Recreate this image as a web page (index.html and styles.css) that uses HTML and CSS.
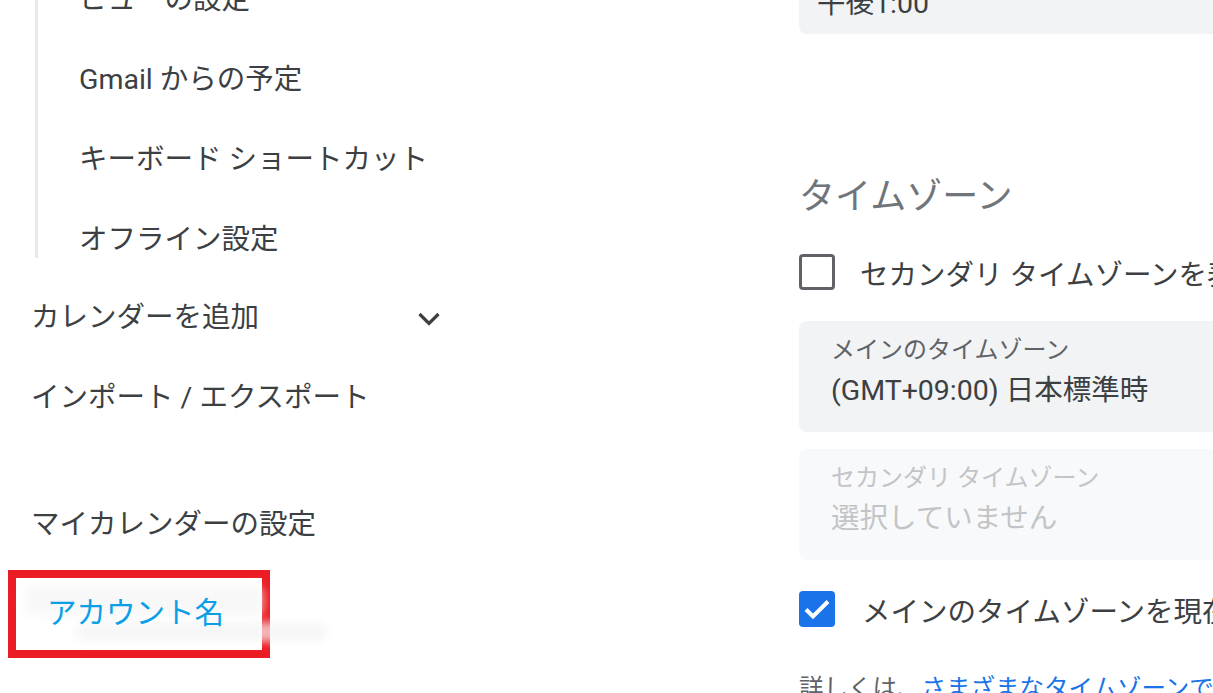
FILE: index.html
```html
<!DOCTYPE html>
<html lang="ja">
<head>
<meta charset="utf-8">
<link rel="stylesheet" href="styles.css">
</head>
<body>
<div class="page">
  <nav class="side">
    <ul class="sublist">
      <li class="subitem">ビューの設定</li>
      <li class="subitem">Gmail からの予定</li>
      <li class="subitem">キーボード ショートカット</li>
      <li class="subitem">オフライン設定</li>
    </ul>
    <div class="navitem expand">
      <span>カレンダーを追加</span>
      <svg class="chev" width="24" height="16" viewBox="0 0 24 16"><path d="M2.5 3l9.5 9.5L21.5 3" fill="none" stroke="#3c4043" stroke-width="3.2"/></svg>
    </div>
    <div class="navitem">インポート / エクスポート</div>
    <div class="navitem mycal">マイカレンダーの設定</div>
    <div class="account">
      <span class="blur b1"></span>
      <span class="blur b2"></span>
      <span class="acct-name">アカウント名</span>
    </div>
  </nav>
  <main class="content">
    <div class="field top">
      <div class="value">午後1:00</div>
    </div>
    <h2 class="heading">タイムゾーン</h2>
    <label class="check">
      <span class="box"></span>
      <span class="ctext">セカンダリ タイムゾーンを表示する</span>
    </label>
    <div class="field first">
      <div class="label">メインのタイムゾーン</div>
      <div class="value">(GMT+09:00) 日本標準時</div>
    </div>
    <div class="field disabled">
      <div class="label">セカンダリ タイムゾーン</div>
      <div class="value">選択していません</div>
    </div>
    <label class="check checked">
      <span class="box">
        <svg width="36" height="36" viewBox="0 0 36 36"><path d="M7 18.5l7 7 15-15" fill="none" stroke="#fff" stroke-width="4"/></svg>
      </span>
      <span class="ctext">メインのタイムゾーンを現在地に更新する</span>
    </label>
    <p class="help">詳しくは、<a href="#">さまざまなタイムゾーンでのカレンダーの使用</a>をご覧ください</p>
  </main>
</div>
</body>
</html>
```

FILE: styles.css
```css
html, body {
  margin: 0;
  padding: 0;
  background: #fff;
  overflow: hidden;
}
body {
  width: 1213px;
  height: 693px;
  font-family: Roboto, "Noto Sans CJK JP", sans-serif;
  color: #3c4043;
}
.page {
  display: grid;
  grid-template-columns: 470px 700px;
  column-gap: 329px;
  width: 1500px;
}
.side {
  display: flex;
  flex-direction: column;
}
.sublist {
  list-style: none;
  margin: -20px 0 0 35px;
  padding: 0;
  border-left: 3px solid #e8e8ef;
  display: flex;
  flex-direction: column;
  gap: 40px;
}
.subitem {
  height: 40px;
  line-height: 40px;
  font-size: 28.5px;
  padding-left: 41px;
  white-space: nowrap;
}
.sublist .subitem:last-child {
  margin-bottom: -2px;
}
.navitem {
  height: 40px;
  line-height: 40px;
  font-size: 28.5px;
  padding-left: 31px;
  white-space: nowrap;
  margin-top: 40px;
}
.expand {
  display: flex;
  align-items: center;
  justify-content: space-between;
  width: 410px;
}
.chev {
  width: 24px;
  height: 16px;
  margin-top: 2px;
}
.mycal {
  margin-top: 87px;
}
.account {
  position: relative;
  margin: 25px 0 0 8px;
  width: 246px;
  height: 72px;
  border: 8px solid #ec1c24;
  display: flex;
  align-items: center;
}
.acct-name {
  position: relative;
  font-size: 29.5px;
  color: #0a9fe6;
  padding-left: 31px;
  padding-bottom: 8px;
}
.blur {
  position: absolute;
  background: #f4f4f6;
  filter: blur(4px);
  border-radius: 8px;
}
.b1 { left: 8px; top: 8px; width: 240px; height: 30px; opacity: .6; }
.b2 { left: 60px; top: 44px; width: 250px; height: 20px; opacity: .7; }

.content {
  display: flex;
  flex-direction: column;
}
.field {
  background: #f1f3f4;
  border-radius: 8px;
  height: 111px;
  box-sizing: border-box;
  padding: 14px 32px 0;
  margin-top: 17px;
}
.field.first {
  margin-top: 29px;
}
.field.top {
  height: 90px;
  margin-top: -56px;
  padding: 40px 18px 0;
}
.field .label {
  font-size: 24px;
  color: #5f6368;
  line-height: 30px;
}
.field .value {
  font-size: 28.5px;
  line-height: 40px;
  margin-top: 6px;
  color: #3c4043;
}
.field.top .value {
  margin-top: 0;
}
.field.disabled {
  background: #f8f9fa;
}
.field.disabled .label,
.field.disabled .value {
  color: #c2c4c6;
}
.heading {
  font-size: 36px;
  font-weight: 400;
  color: #70757a;
  margin: 140px 0 0 0;
  line-height: 46px;
}
.check {
  display: flex;
  align-items: center;
  height: 40px;
  margin-top: 32px;
}
.check .box {
  width: 36px;
  height: 36px;
  box-sizing: border-box;
  border: 3.5px solid #5f6368;
  border-radius: 4px;
  flex: none;
  display: flex;
  align-items: center;
  justify-content: center;
}
.check .ctext {
  font-size: 28.5px;
  margin-left: 25px;
  white-space: nowrap;
  color: #3c4043;
}
.check.checked {
  margin-top: 29px;
}
.check.checked .box {
  background: #1a73e8;
  border: none;
}
.check.checked .ctext {
  margin-left: 27px;
}
.help {
  font-size: 24.5px;
  color: #5f6368;
  margin: 45px 0 0 0;
  white-space: nowrap;
  line-height: 30px;
}
.help a {
  color: #1a73e8;
  text-decoration: none;
}
```
